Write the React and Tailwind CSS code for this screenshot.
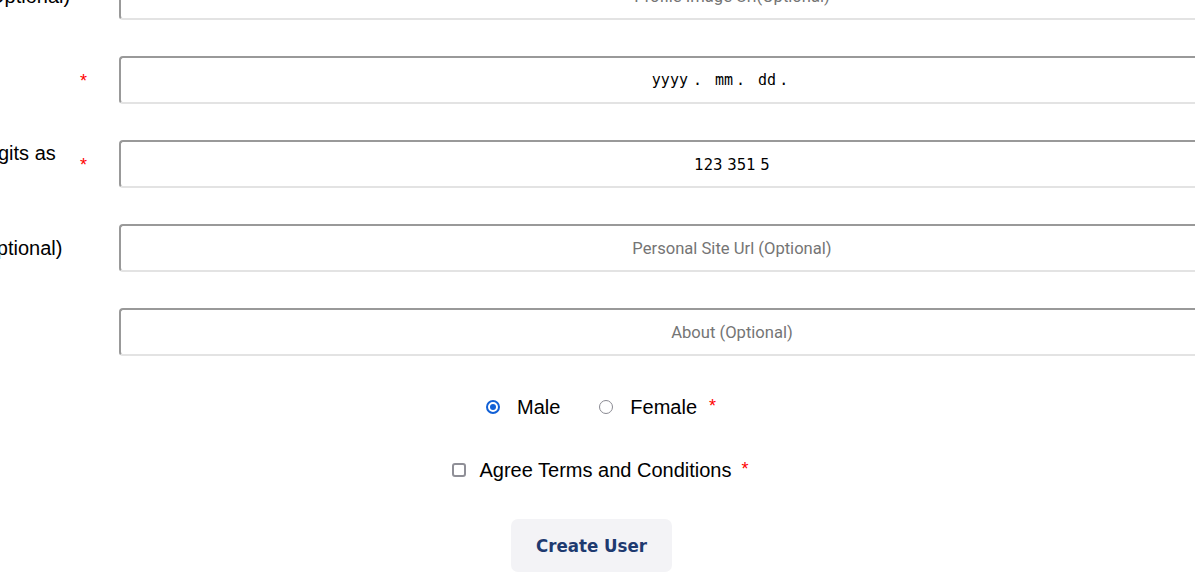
import React from 'react';

const fields = [
  { label: 'Profile Image URL(Optional)', placeholder: 'Profile Image Url(Optional)' },
  { label: 'Date of Birth', required: true, type: 'date' },
  { label: 'Phone Number (7 digits as 123 351 5)', required: true, value: '123 351 5' },
  { label: 'Personal Site Url (Optional)', placeholder: 'Personal Site Url (Optional)' },
  { label: '', placeholder: 'About (Optional)' },
];

const inputBox =
  'w-[1226px] h-[48px] shrink-0 ml-[32px] rounded-[4px] border-2 border-t-[#999999] border-l-[#999999] border-b-[#e3e3e3] border-r-[#e3e3e3] bg-white';

const Star = ({ className = '' }) => (
  <span className={`text-[18px] leading-none text-[#ff0000] font-['Liberation_Sans',Arial,sans-serif] ${className}`}>*</span>
);

const DateValue = () => (
  <div className={`${inputBox} flex items-center justify-center pr-[24px] font-['DejaVu_Sans_Mono',monospace] text-[15px] text-black whitespace-pre`}>
    <span>yyyy</span>
    <span className="ml-[5px]">.</span>
    <span className="ml-[13px]">mm</span>
    <span className="ml-[3px]">.</span>
    <span className="ml-[13px]">dd</span>
    <span className="ml-[3px]">.</span>
  </div>
);

const Field = ({ field }) => (
  <div className="flex items-center">
    <div className="w-[260px] shrink-0 text-[20px] leading-[22px] text-black">{field.label}</div>
    <div className="w-[7px] ml-[1px] shrink-0 flex items-start h-[16px]">
      {field.required && <Star />}
    </div>
    {field.type === 'date' ? (
      <DateValue />
    ) : (
      <input
        readOnly
        defaultValue={field.value}
        placeholder={field.placeholder}
        className={`${inputBox} px-2 text-center outline-none ${
          field.value
            ? "font-['DejaVu_Sans_Condensed','DejaVu_Sans',sans-serif] text-[16.5px] text-black"
            : "font-['Roboto',sans-serif] text-[16.6px] placeholder:text-[#757575]"
        }`}
      />
    )}
  </div>
);

const Radio = ({ checked }) => (
  <span
    className={`w-[14px] h-[14px] rounded-full flex items-center justify-center shrink-0 ${
      checked ? 'border-[2.5px] border-[#1160d6]' : 'border-[1.8px] border-[#8a8a92]'
    }`}
  >
    {checked && <span className="w-[6px] h-[6px] rounded-full bg-[#1160d6]" />}
  </span>
);

const App = () => {
  return (
    <div className="w-[1195px] h-[584px] overflow-hidden bg-white font-['Liberation_Sans',Arial,sans-serif] text-black">
      <div className="ml-[-181px] mt-[-28px] flex flex-col gap-[36px]">
        {fields.map((f, i) => (
          <Field key={i} field={f} />
        ))}
      </div>

      <div className="w-[1183px] flex flex-col items-center">
        <div className="mt-[39px] h-[24px] flex items-center text-[20px] leading-[24px]">
          <Radio checked />
          <span className="ml-[17px]">Male</span>
          <span className="ml-[39px]">
            <Radio />
          </span>
          <span className="ml-[17px] relative">
            Female
            <Star className="absolute left-full top-[2px] ml-[12px]" />
          </span>
        </div>

        <div className="mt-[39px] h-[24px] flex items-center text-[20px] leading-[24px]">
          <span className="w-[14px] h-[14px] rounded-[3px] border-2 border-[#8f8f97] shrink-0" />
          <span className="ml-[14px] relative">
            Agree Terms and Conditions
            <Star className="absolute left-full top-[2px] ml-[10px]" />
          </span>
        </div>

        <button className="mt-[37px] w-[161px] h-[53px] rounded-[7px] bg-[#f3f3f6] text-[#1e3a70] font-bold text-[18.5px] font-['DejaVu_Sans_Condensed','DejaVu_Sans',sans-serif]">
          Create User
        </button>
      </div>
    </div>
  );
};

export default App;
